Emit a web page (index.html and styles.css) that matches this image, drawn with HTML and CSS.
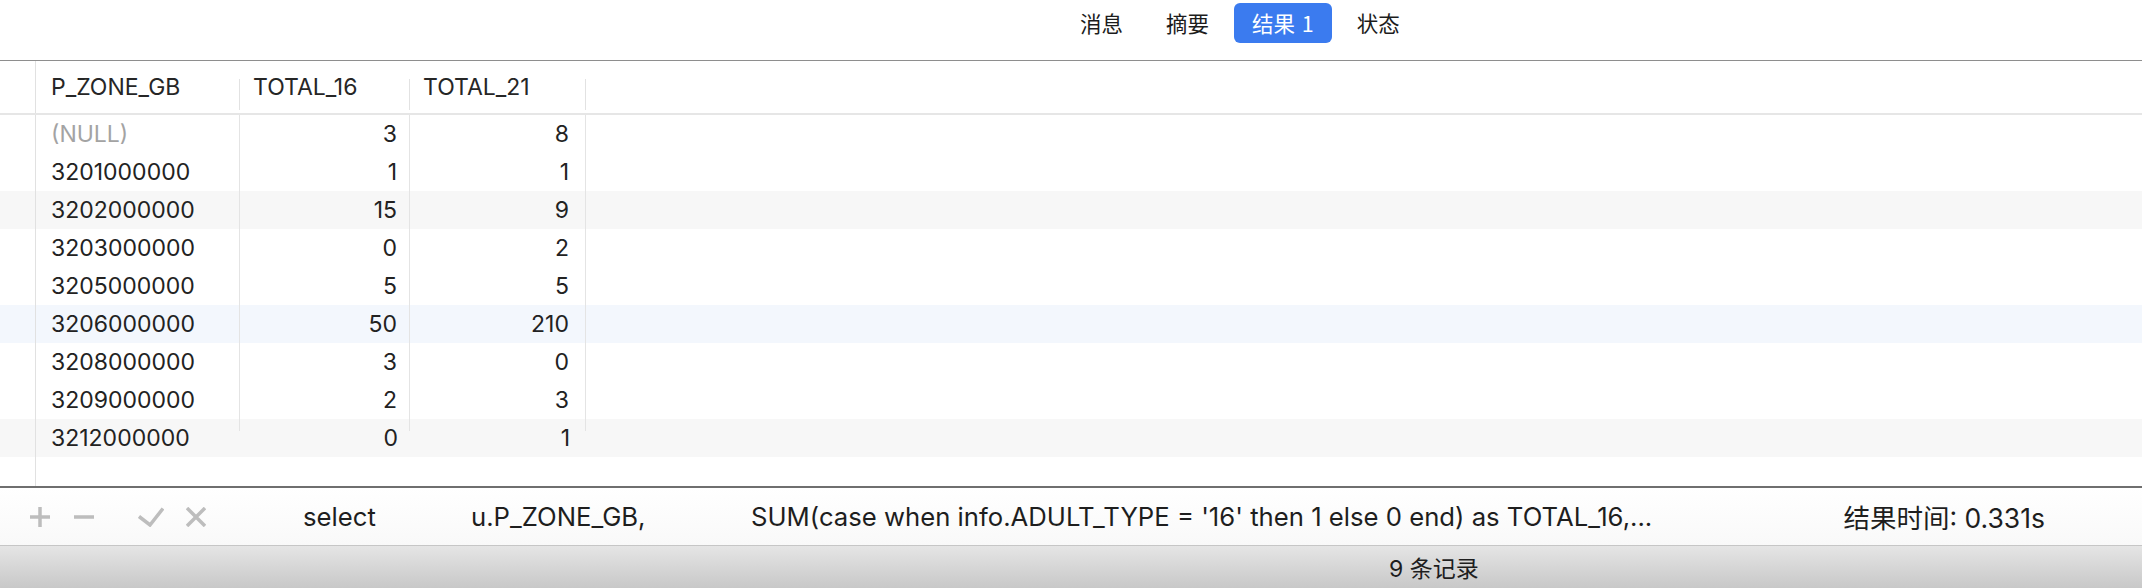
FILE: index.html
```html
<!DOCTYPE html>
<html lang="zh">
<head>
<meta charset="utf-8">
<title>结果 1</title>
<link rel="stylesheet" href="styles.css">
</head>
<body>
<div class="window">
  <div class="tabbar">
    <div class="tabs">
      <span class="tab">消息</span>
      <span class="tab">摘要</span>
      <span class="tab active">结果 1</span>
      <span class="tab">状态</span>
    </div>
  </div>

  <div class="grid">
    <div class="row head">
      <div class="gut"></div>
      <div class="c c1">P_ZONE_GB</div>
      <div class="c c2">TOTAL_16</div>
      <div class="c c3">TOTAL_21</div>
      <div class="c rest"></div>
    </div>
    <div class="row">
      <div class="gut"></div>
      <div class="c c1 null">(NULL)</div>
      <div class="c c2">3</div>
      <div class="c c3">8</div>
      <div class="c rest"></div>
    </div>
    <div class="row">
      <div class="gut"></div>
      <div class="c c1">3201000000</div>
      <div class="c c2">1</div>
      <div class="c c3">1</div>
      <div class="c rest"></div>
    </div>
    <div class="row alt">
      <div class="gut"></div>
      <div class="c c1">3202000000</div>
      <div class="c c2">15</div>
      <div class="c c3">9</div>
      <div class="c rest"></div>
    </div>
    <div class="row">
      <div class="gut"></div>
      <div class="c c1">3203000000</div>
      <div class="c c2">0</div>
      <div class="c c3">2</div>
      <div class="c rest"></div>
    </div>
    <div class="row">
      <div class="gut"></div>
      <div class="c c1">3205000000</div>
      <div class="c c2">5</div>
      <div class="c c3">5</div>
      <div class="c rest"></div>
    </div>
    <div class="row hover">
      <div class="gut"></div>
      <div class="c c1">3206000000</div>
      <div class="c c2">50</div>
      <div class="c c3">210</div>
      <div class="c rest"></div>
    </div>
    <div class="row">
      <div class="gut"></div>
      <div class="c c1">3208000000</div>
      <div class="c c2">3</div>
      <div class="c c3">0</div>
      <div class="c rest"></div>
    </div>
    <div class="row">
      <div class="gut"></div>
      <div class="c c1">3209000000</div>
      <div class="c c2">2</div>
      <div class="c c3">3</div>
      <div class="c rest"></div>
    </div>
    <div class="row alt last">
      <div class="gut"></div>
      <div class="c c1">3212000000</div>
      <div class="c c2">0</div>
      <div class="c c3">1</div>
      <div class="c rest"></div>
    </div>
    <div class="filler"><div class="gut"></div></div>
  </div>

  <div class="toolbar">
    <div class="tools">
      <svg class="ico" width="20" height="20" viewBox="0 0 20 20"><path d="M0 10H20M10 0V20"/></svg>
      <svg class="ico minus" width="20" height="20" viewBox="0 0 20 20"><path d="M0 10H20"/></svg>
      <svg class="ico check" width="26" height="20" viewBox="0 0 26 20"><path d="M1 9.5L12 18L25 1.5"/></svg>
      <svg class="ico cross" width="20" height="20" viewBox="0 0 20 20"><path d="M1 1L19 19M19 1L1 19"/></svg>
    </div>
    <div class="sql">
      <span class="s1">select</span>
      <span class="s2">u.P_ZONE_GB,</span>
      <span class="s3">SUM(case when info.ADULT_TYPE = '16' then 1 else 0 end) as TOTAL_16,...</span>
    </div>
    <div class="time">结果时间: 0.331s</div>
  </div>

  <div class="status">
    <span class="count">9 条记录</span>
  </div>
</div>
</body>
</html>
```

FILE: styles.css
```css
html, body {
  margin: 0;
  padding: 0;
  background: #ffffff;
}

body {
  font-family: "Inter", "Noto Sans CJK SC", sans-serif;
  color: #222222;
}

.window {
  width: 2142px;
  height: 588px;
  display: flex;
  flex-direction: column;
  overflow: hidden;
}

/* ---------- tab bar ---------- */
.tabbar {
  height: 60px;
  border-bottom: 1px solid #8e8e8e;
  flex: none;
}

.tabs {
  display: flex;
  gap: 7px;
  margin-left: 1062px;
  margin-top: 3px;
}

.tab {
  height: 40px;
  line-height: 40px;
  padding: 0 18px;
  font-size: 21.5px;
  color: #1c1c1c;
  border-radius: 6px;
  font-family: "Noto Sans CJK SC", "Inter", sans-serif;
}

.tab.active {
  background: #3b7bef;
  color: #ffffff;
  word-spacing: 2px;
}

/* ---------- grid ---------- */
.grid {
  flex: 1;
  display: flex;
  flex-direction: column;
  min-height: 0;
}

.row {
  display: grid;
  grid-template-columns: 36px 204px 170px 176px 1fr;
  height: 38px;
  flex: none;
  font-size: 23px;
  line-height: 38px;
}

.row.head {
  height: 52px;
  line-height: 52px;
  border-bottom: 2px solid #e6e6e6;
  color: #262626;
}

.row.alt {
  background: #f7f7f7;
}

.row.hover {
  background: #f3f7fd;
}

.gut {
  border-right: 1px solid #e1e1e1;
}

.c {
  white-space: nowrap;
  overflow: hidden;
}

.c1, .c2, .c3 {
  border-right: 1px solid #e4e4e4;
}

.c1 {
  padding-left: 15px;
}

.c2 {
  text-align: right;
  padding-right: 12px;
}

.c3 {
  text-align: right;
  padding-right: 16px;
}

.head .c1,
.head .c2,
.head .c3 {
  border-right: none;
  text-align: left;
  background: linear-gradient(#e2e2e2, #e2e2e2) right 18px / 1px 31px no-repeat;
}

.head .c2,
.head .c3 {
  padding-left: 13px;
}

.row.last .c1,
.row.last .c2,
.row.last .c3 {
  border-right: none;
  background: linear-gradient(#e4e4e4, #e4e4e4) right top / 1px 12px no-repeat;
}

.null {
  color: #a3a3a3;
}

.filler {
  flex: 1;
  display: flex;
}

.filler .gut {
  width: 35px;
}

/* ---------- toolbar ---------- */
.toolbar {
  flex: none;
  height: 57px;
  border-top: 2px solid #6f6f6f;
  border-bottom: 1px solid #c6c6c6;
  background: linear-gradient(#ffffff, #f9f9f9);
  display: flex;
  align-items: center;
  font-size: 25.7px;
  color: #1e1e1e;
}

.tools {
  display: flex;
  align-items: center;
  margin-left: 30px;
  width: 273px;
  flex: none;
}

.ico {
  fill: none;
  stroke: #bdbdbd;
  stroke-width: 3.5;
  flex: none;
}

.minus {
  margin-left: 24px;
}

.check {
  margin-left: 44px;
}

.cross {
  margin-left: 22px;
}

.sql {
  display: flex;
  white-space: nowrap;
}

.s1 {
  width: 168px;
}

.s2 {
  width: 280px;
}

.time {
  margin-left: auto;
  margin-right: 97px;
  white-space: nowrap;
  font-size: 26.5px;
}

/* ---------- status bar ---------- */
.status {
  flex: none;
  height: 42px;
  background: linear-gradient(#e5e5e5, #c8c8c8);
  display: flex;
  align-items: center;
  font-size: 23px;
  color: #1e1e1e;
}

.count {
  margin-left: 1389px;
}
```
